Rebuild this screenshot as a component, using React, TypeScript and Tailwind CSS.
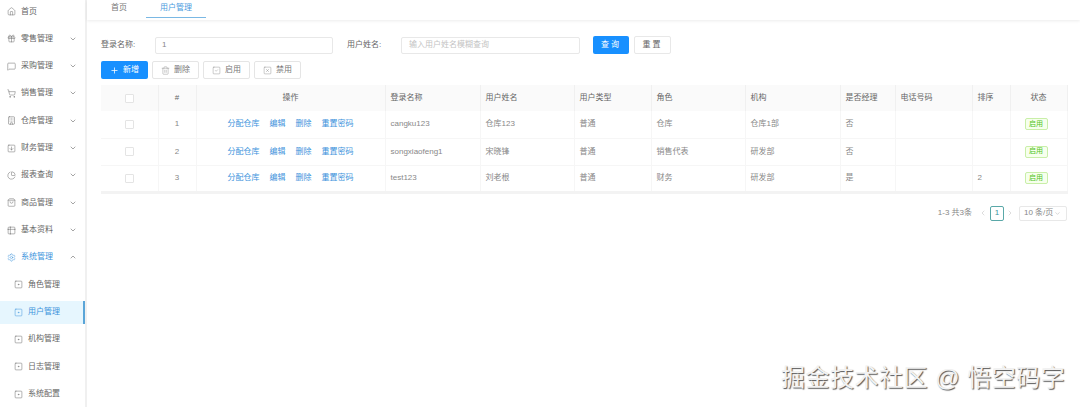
import { ChevronDown, ChevronUp, ChevronLeft, ChevronRight, Plus, Trash2, SquareCheck, SquareX } from "lucide-react";
import { Home, Gift, MessageSquare, ShoppingCart, Building, SquareArrowDown, PieChart, ShoppingBag, Table2, Settings, SquareDot } from "lucide-react";

const menus = [
  { label: "首页", icon: Home },
  { label: "零售管理", icon: Gift, arrow: true },
  { label: "采购管理", icon: MessageSquare, arrow: true },
  { label: "销售管理", icon: ShoppingCart, arrow: true },
  { label: "仓库管理", icon: Building, arrow: true },
  { label: "财务管理", icon: SquareArrowDown, arrow: true },
  { label: "报表查询", icon: PieChart, arrow: true },
  { label: "商品管理", icon: ShoppingBag, arrow: true },
  { label: "基本资料", icon: Table2, arrow: true },
];

const subMenus = ["角色管理", "用户管理", "机构管理", "日志管理", "系统配置"];

const rows = [
  { id: 1, login: "cangku123", name: "仓库123", role: "仓库", org: "仓库1部", manager: "否", sort: "" },
  { id: 2, login: "songxiaofeng1", name: "宋晓锋", role: "销售代表", org: "研发部", manager: "否", sort: "" },
  { id: 3, login: "test123", name: "刘老根", role: "财务", org: "研发部", manager: "是", sort: "2" },
];

function Sidebar() {
  return (
    <aside className="flex w-[85px] shrink-0 flex-col gap-[4.33px] text-[8px] text-[#666]">
      {menus.map((m) => (
        <div key={m.label} className="flex h-[23px] shrink-0 items-center pl-[7px]">
          <m.icon size={9} strokeWidth={1.3} className="text-[#666]" />
          <span className="ml-[5px]">{m.label}</span>
          {m.arrow && <ChevronDown size={8} strokeWidth={2} className="ml-auto mr-[8px] text-[#777]" />}
        </div>
      ))}
      <div className="flex h-[23px] shrink-0 items-center pl-[7px] text-[#3d93dc]">
        <Settings size={9} strokeWidth={1.3} />
        <span className="ml-[5px]">系统管理</span>
        <ChevronUp size={8} strokeWidth={2} className="ml-auto mr-[8px] text-[#777]" />
      </div>
      {subMenus.map((s) => {
        const active = s === "用户管理";
        return (
          <div
            key={s}
            className={
              active
                ? "flex h-[23px] shrink-0 items-center border-r-2 border-[#5aa5d8] bg-[#e6f6fe] pl-[14px] text-[#3d93dc]"
                : "flex h-[23px] shrink-0 items-center pl-[14px]"
            }
          >
            <SquareDot size={9} strokeWidth={1.3} />
            <span className="ml-[5px]">{s}</span>
          </div>
        );
      })}
    </aside>
  );
}

function Tabs() {
  return (
    <div className="flex h-[20px] shrink-0 items-start bg-white pl-[5px] text-[8px] text-[#777] shadow-[0_1px_3px_rgba(0,0,0,0.08)]">
      <div className="flex h-[18px] w-[54px] items-center justify-center pb-[3px]">首页</div>
      <div className="flex h-[18px] w-[60px] items-center justify-center border-b border-[#7ab8e4] pb-[2px] text-[#4a9ade]">用户管理</div>
    </div>
  );
}

function SearchBar() {
  return (
    <div className="flex h-[18px] items-center text-[8px] text-[#666]">
      <span className="w-[54px]">登录名称:</span>
      <div className="flex h-[17px] w-[178px] items-center rounded-[2px] border border-[#e8e8e8] pl-[6px] text-[#888]">1</div>
      <span className="ml-[14px] w-[54px]">用户姓名:</span>
      <div className="flex h-[17px] w-[179px] items-center rounded-[2px] border border-[#e8e8e8] pl-[7px] text-[#c4c4c4]">输入用户姓名模糊查询</div>
      <button className="ml-[13px] h-[18px] w-[36px] rounded-[2px] bg-[#1890ff] tracking-[2px] text-white">查询</button>
      <button className="ml-[5px] h-[18px] w-[37px] rounded-[2px] border border-[#e8e8e8] tracking-[2px] text-[#666]">重置</button>
    </div>
  );
}

function Toolbar() {
  const btn = "flex h-[18px] w-[47px] items-center justify-center gap-[4px] rounded-[2px] border border-[#e5e5e5] text-[#777]";
  return (
    <div className="mt-[7px] flex items-center gap-[4px] text-[8px]">
      <button className="flex h-[18px] w-[47px] items-center justify-center gap-[4px] rounded-[2px] bg-[#1890ff] text-white">
        <Plus size={9} strokeWidth={2} />
        新增
      </button>
      <button className={btn}>
        <Trash2 size={9} strokeWidth={1} />
        删除
      </button>
      <button className={btn}>
        <SquareCheck size={9} strokeWidth={1} />
        启用
      </button>
      <button className={btn}>
        <SquareX size={9} strokeWidth={1} />
        禁用
      </button>
    </div>
  );
}

function Box() {
  return <div className="mx-auto h-[9px] w-[9px] rounded-[1px] border border-[#e4e4e4] bg-white" />;
}

function UserTable() {
  const th = "h-[26px] border-r border-[#f0f0f0] bg-[#fafafa] font-normal text-[#666]";
  const thText = th + " pl-[5px] text-left";
  const thCenter = th + " text-center";
  const td = "h-[27px] border-b border-r border-[#f6f6f6] text-[#888]";
  const tdText = td + " pl-[5px]";
  return (
    <table className="mt-[6px] w-[966px] table-fixed border-collapse border-b-[3px] border-[#f3f3f3] text-[8px]">
      <colgroup>
        <col className="w-[57px]" />
        <col className="w-[38px]" />
        <col className="w-[189px]" />
        <col className="w-[95px]" />
        <col className="w-[94px]" />
        <col className="w-[77px]" />
        <col className="w-[94px]" />
        <col className="w-[95px]" />
        <col className="w-[55px]" />
        <col className="w-[77px]" />
        <col className="w-[38px]" />
        <col className="w-[57px]" />
      </colgroup>
      <thead>
        <tr>
          <th className={thCenter}><Box /></th>
          <th className={thCenter}>#</th>
          <th className={thCenter}>操作</th>
          <th className={thText}>登录名称</th>
          <th className={thText}>用户姓名</th>
          <th className={thText}>用户类型</th>
          <th className={thText}>角色</th>
          <th className={thText}>机构</th>
          <th className={thText}>是否经理</th>
          <th className={thText}>电话号码</th>
          <th className={thText}>排序</th>
          <th className={thCenter}>状态</th>
        </tr>
      </thead>
      <tbody>
        {rows.map((r) => (
          <tr key={r.id}>
            <td className={td}><Box /></td>
            <td className={td + " text-center"}>{r.id}</td>
            <td className={td}>
              <div className="flex justify-center gap-[10px] text-[#3d93dc]">
                <span>分配仓库</span>
                <span>编辑</span>
                <span>删除</span>
                <span>重置密码</span>
              </div>
            </td>
            <td className={tdText}>{r.login}</td>
            <td className={tdText}>{r.name}</td>
            <td className={tdText}>普通</td>
            <td className={tdText}>{r.role}</td>
            <td className={tdText}>{r.org}</td>
            <td className={tdText}>{r.manager}</td>
            <td className={tdText}></td>
            <td className={tdText}>{r.sort}</td>
            <td className={td}>
              <div className="ml-[14px] flex h-[12px] w-[23px] items-center justify-center rounded-[2px] border border-[#c9efa8] bg-[#f6ffed] text-[7px] text-[#52c41a]">
                启用
              </div>
            </td>
          </tr>
        ))}
      </tbody>
    </table>
  );
}

function Pagination() {
  return (
    <div className="mt-[12px] flex h-[15px] w-[966px] items-center justify-end text-[8px] text-[#888]">
      <span>1-3 共3条</span>
      <ChevronLeft size={8} strokeWidth={1.5} className="ml-[7px] text-[#bbb]" />
      <div className="ml-[3px] flex h-[15px] w-[14px] items-center justify-center rounded-[2px] border border-[#5aa8a8] text-[#3d93a0]">1</div>
      <ChevronRight size={8} strokeWidth={1.5} className="ml-[2px] text-[#bbb]" />
      <div className="ml-[5px] flex h-[15px] w-[48px] shrink-0 items-center gap-[1px] rounded-[2px] border border-[#e8e8e8] pl-[4px]">
        <span className="whitespace-nowrap">10 条/页</span>
        <ChevronDown size={7} strokeWidth={1.5} className="shrink-0 text-[#aaa]" />
      </div>
    </div>
  );
}

export default function App() {
  return (
    <div className="relative flex h-[407px] w-[1080px] overflow-hidden bg-white font-['Liberation_Sans','Noto_Sans_CJK_SC',sans-serif]">
      <Sidebar />
      <main className="flex min-w-0 flex-1 flex-col border-l-2 border-[#f0f0f0]">
        <Tabs />
        <div className="pl-[14px] pt-[16px]">
          <SearchBar />
          <Toolbar />
          <UserTable />
          <Pagination />
        </div>
      </main>
      <div className="absolute left-[781px] top-[360px] whitespace-nowrap text-[24px] tracking-[0.5px] text-[#f2f2f2] [text-shadow:1px_1px_1px_#555]">
        掘金技术社区 @ 悟空码字
      </div>
    </div>
  );
}
